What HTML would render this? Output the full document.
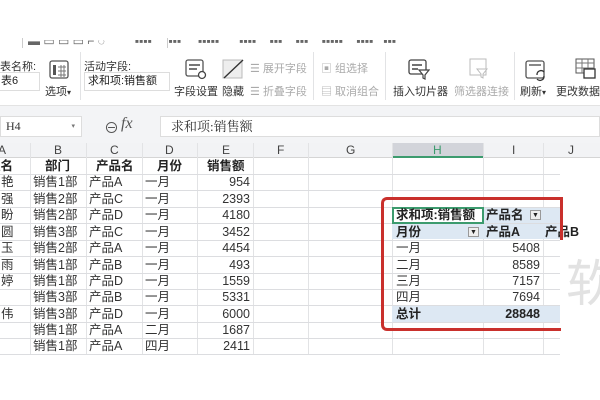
<!DOCTYPE html>
<html><head><meta charset="utf-8"><style>
*{margin:0;padding:0;box-sizing:border-box}
body{width:600px;height:400px;overflow:hidden;background:#fff;position:relative;font-family:"Liberation Sans","Noto Sans CJK SC",sans-serif;font-size:12px;color:#222}
.a{position:absolute;white-space:nowrap}
.rb{font-size:11px;color:#333}
.dim{color:#aaa}
.vl{position:absolute;width:1px;background:#e2e3e5}
.hl{position:absolute;height:1px;background:#dcdde0}
.row{position:absolute;left:0;width:600px;height:16px;line-height:16px;font-size:12.5px;color:#333}
.row span{position:absolute;top:0;white-space:nowrap}
.r{text-align:right}
</style></head><body>
<!-- top menu fragments -->
<div class="a" style="left:28px;top:40px;width:570px;height:6px;overflow:hidden;color:#666;font-size:12px;line-height:2px">▬ ▭ ▭ ▭ ⌐ ◌ &nbsp;&nbsp;&nbsp;&nbsp;&nbsp;&nbsp;&nbsp; ▪▪▪▪ &nbsp;&nbsp;&nbsp; ▪▪▪ &nbsp;&nbsp;&nbsp; ▪▪▪▪▪ &nbsp;&nbsp;&nbsp;&nbsp; ▪▪▪▪ &nbsp;&nbsp; ▪▪▪ &nbsp;&nbsp; ▪▪▪ &nbsp;&nbsp; ▪▪▪▪▪ &nbsp;&nbsp; ▪▪▪▪ &nbsp; ▪▪▪</div>
<div class="vl" style="left:22px;top:38px;height:10px;background:#ccc"></div>
<div class="vl" style="left:167px;top:38px;height:10px;background:#ccc"></div>
<!-- ribbon -->
<div class="a rb" style="left:0;top:58px">表名称:</div>
<div class="a" style="left:-2px;top:72px;width:42px;height:19px;border:1px solid #ddd;font-size:11px;line-height:17px;padding-left:2px">表6</div>
<svg class="a" style="left:49px;top:60px" width="20" height="20"><rect x="1" y="1" width="18" height="17" rx="2" fill="none" stroke="#555" stroke-width="1.3"/><rect x="4" y="5" width="3" height="10" fill="#555"/><path d="M9 7h8M9 11h8M9 15h8M12 5v12M15 5v12" stroke="#777" stroke-width="1"/></svg>
<div class="a rb" style="left:45px;top:83px">选项<span style="font-size:8px">▾</span></div>
<div class="vl" style="left:80px;top:52px;height:48px"></div>
<div class="a rb" style="left:84px;top:58px">活动字段:</div>
<div class="a" style="left:84px;top:72px;width:86px;height:19px;border:1px solid #ddd;font-size:11px;line-height:17px;padding-left:3px">求和项:销售额</div>
<svg class="a" style="left:185px;top:58px" width="22" height="22"><rect x="1" y="2" width="17" height="16" rx="2" fill="none" stroke="#555" stroke-width="1.3"/><path d="M4 7h11M4 11h8" stroke="#777" stroke-width="2"/><circle cx="17" cy="17" r="3.5" fill="#fff" stroke="#444" stroke-width="1.3"/></svg>
<div class="a rb" style="left:174px;top:83px">字段设置</div>
<svg class="a" style="left:222px;top:58px" width="22" height="22"><rect x="1" y="2" width="19" height="18" fill="#eee" stroke="#bbb"/><path d="M2 20L21 2" stroke="#333" stroke-width="1.4"/></svg>
<div class="a rb" style="left:222px;top:83px">隐藏</div>
<div class="a rb dim" style="left:250px;top:60px">☰ 展开字段</div>
<div class="a rb dim" style="left:250px;top:83px">☰ 折叠字段</div>
<div class="vl" style="left:313px;top:52px;height:48px"></div>
<div class="a rb dim" style="left:321px;top:60px">▣ 组选择</div>
<div class="a rb dim" style="left:321px;top:83px">▤ 取消组合</div>
<div class="vl" style="left:385px;top:52px;height:48px"></div>
<svg class="a" style="left:408px;top:58px" width="22" height="22"><rect x="1" y="2" width="17" height="14" rx="2" fill="none" stroke="#444" stroke-width="1.3"/><path d="M4 7h10M4 11h6" stroke="#444" stroke-width="1.5"/><path d="M11 12h10l-4 5v4l-2-1v-3z" fill="#fff" stroke="#444" stroke-width="1.2"/></svg>
<div class="a rb" style="left:393px;top:83px">插入切片器</div>
<svg class="a" style="left:468px;top:58px" width="22" height="22"><rect x="2" y="1" width="16" height="16" fill="none" stroke="#bbb"/><path d="M9 11h10l-4 5v4l-2-1v-3z" fill="#fff" stroke="#bbb"/></svg>
<div class="a rb dim" style="left:454px;top:83px">筛选器连接</div>
<div class="vl" style="left:514px;top:52px;height:48px"></div>
<svg class="a" style="left:525px;top:60px" width="22" height="22"><rect x="1" y="1" width="18" height="17" rx="2" fill="none" stroke="#555" stroke-width="1.3"/><path d="M4 5h12" stroke="#888" stroke-width="2"/><path d="M12 15a4 4 0 0 1 7-3M19 16a4 4 0 0 1-7 3" fill="none" stroke="#333" stroke-width="1.3"/></svg>
<div class="a rb" style="left:520px;top:83px">刷新<span style="font-size:8px">▾</span></div>
<svg class="a" style="left:575px;top:58px" width="22" height="22"><rect x="1" y="1" width="18" height="14" fill="none" stroke="#555"/><path d="M1 5h18M1 10h18M7 1v14M13 1v14" stroke="#777"/><rect x="9" y="11" width="11" height="9" fill="#fff" stroke="#333" stroke-width="1.3"/></svg>
<div class="a rb" style="left:556px;top:83px">更改数据源</div>
<!-- band -->
<div class="a" style="left:0;top:105px;width:600px;height:38px;background:#f3f4f6;border-top:1px solid #e3e3e3"></div>
<div class="a" style="left:0;top:116px;width:82px;height:21px;background:#fff;border:1px solid #ddd;font-family:'Liberation Serif','Noto Serif CJK SC',serif;font-size:12px;line-height:19px;padding-left:5px;color:#333">H4<span style="position:absolute;right:6px;font-size:7px;color:#777">▾</span></div>
<div class="a" style="left:104px;top:117px;font-size:15px;color:#555">⊖</div>
<div class="a" style="left:121px;top:115px;font-family:'Liberation Serif',serif;font-style:italic;font-size:16px;color:#555">fx</div>
<div class="a" style="left:160px;top:116px;width:440px;height:21px;background:#fff;border:1px solid #ddd;font-family:'Liberation Serif','Noto Serif CJK SC',serif;font-size:13px;line-height:19px;padding-left:10px;color:#333">求和项:销售额</div>
<!-- column header -->
<div class="a" style="left:0;top:143px;width:600px;height:15px;background:#f2f3f5;border-bottom:1px solid #d5d5d5"></div>
<div class="a" style="left:392px;top:143px;width:91px;height:15px;background:#d2d4da;border-bottom:2px solid #3c9b6e"></div>
<div class="a" style="left:0;top:143px;font-size:12px;color:#444;line-height:15px;width:600px;height:15px">
<span class="a" style="left:-2px">A</span><span class="a" style="left:54px">B</span><span class="a" style="left:110px">C</span><span class="a" style="left:165px">D</span><span class="a" style="left:222px">E</span><span class="a" style="left:277px">F</span><span class="a" style="left:346px">G</span><span class="a" style="left:433px;color:#3c9b6e">H</span><span class="a" style="left:512px">I</span><span class="a" style="left:568px">J</span></div>
<!-- grid lines -->
<div class="vl" style="left:30px;top:143px;height:212px"></div>
<div class="vl" style="left:86px;top:143px;height:212px"></div>
<div class="vl" style="left:142px;top:143px;height:212px"></div>
<div class="vl" style="left:197px;top:143px;height:212px"></div>
<div class="vl" style="left:253px;top:143px;height:212px"></div>
<div class="vl" style="left:308px;top:143px;height:212px"></div>
<div class="vl" style="left:392px;top:143px;height:212px"></div>
<div class="vl" style="left:483px;top:143px;height:212px"></div>
<div class="vl" style="left:543px;top:143px;height:212px"></div>
<div class="hl" style="left:0;top:174px;width:560px"></div>
<div class="hl" style="left:0;top:190px;width:560px"></div>
<div class="hl" style="left:0;top:207px;width:560px"></div>
<div class="hl" style="left:0;top:223px;width:560px"></div>
<div class="hl" style="left:0;top:240px;width:560px"></div>
<div class="hl" style="left:0;top:256px;width:560px"></div>
<div class="hl" style="left:0;top:273px;width:560px"></div>
<div class="hl" style="left:0;top:289px;width:560px"></div>
<div class="hl" style="left:0;top:305px;width:560px"></div>
<div class="hl" style="left:0;top:322px;width:560px"></div>
<div class="hl" style="left:0;top:338px;width:560px"></div>
<div class="hl" style="left:0;top:354px;width:560px"></div>
<!-- data -->
<div class="row" style="top:158px;font-weight:bold;color:#222"><span style="left:-12px">姓名</span><span style="left:45px">部门</span><span style="left:96px">产品名</span><span style="left:157px">月份</span><span style="left:207px">销售额</span></div>
<div class="row" style="top:174px"><span style="left:1px">艳</span><span style="left:33px">销售1部</span><span style="left:89px">产品A</span><span style="left:145px">一月</span><span class="r" style="left:200px;width:50px">954</span></div>
<div class="row" style="top:191px"><span style="left:1px">强</span><span style="left:33px">销售2部</span><span style="left:89px">产品C</span><span style="left:145px">一月</span><span class="r" style="left:200px;width:50px">2393</span></div>
<div class="row" style="top:207px"><span style="left:1px">盼</span><span style="left:33px">销售2部</span><span style="left:89px">产品D</span><span style="left:145px">一月</span><span class="r" style="left:200px;width:50px">4180</span></div>
<div class="row" style="top:224px"><span style="left:1px">圆</span><span style="left:33px">销售3部</span><span style="left:89px">产品C</span><span style="left:145px">一月</span><span class="r" style="left:200px;width:50px">3452</span></div>
<div class="row" style="top:240px"><span style="left:1px">玉</span><span style="left:33px">销售2部</span><span style="left:89px">产品A</span><span style="left:145px">一月</span><span class="r" style="left:200px;width:50px">4454</span></div>
<div class="row" style="top:257px"><span style="left:1px">雨</span><span style="left:33px">销售1部</span><span style="left:89px">产品B</span><span style="left:145px">一月</span><span class="r" style="left:200px;width:50px">493</span></div>
<div class="row" style="top:273px"><span style="left:1px">婷</span><span style="left:33px">销售1部</span><span style="left:89px">产品D</span><span style="left:145px">一月</span><span class="r" style="left:200px;width:50px">1559</span></div>
<div class="row" style="top:289px"><span style="left:33px">销售3部</span><span style="left:89px">产品B</span><span style="left:145px">一月</span><span class="r" style="left:200px;width:50px">5331</span></div>
<div class="row" style="top:306px"><span style="left:1px">伟</span><span style="left:33px">销售3部</span><span style="left:89px">产品D</span><span style="left:145px">一月</span><span class="r" style="left:200px;width:50px">6000</span></div>
<div class="row" style="top:322px"><span style="left:33px">销售1部</span><span style="left:89px">产品A</span><span style="left:145px">二月</span><span class="r" style="left:200px;width:50px">1687</span></div>
<div class="row" style="top:338px"><span style="left:33px">销售1部</span><span style="left:89px">产品A</span><span style="left:145px">四月</span><span class="r" style="left:200px;width:50px">2411</span></div>
<!-- pivot -->
<div class="a" style="left:483px;top:208px;width:77px;height:15px;background:#dde8f3"></div>
<div class="a" style="left:392px;top:224px;width:168px;height:15px;background:#dde8f3"></div>
<div class="a" style="left:392px;top:306px;width:168px;height:16px;background:#dde8f3"></div>
<div class="a" style="left:392px;top:207px;width:92px;height:17px;border:2px solid #3c9b6e"></div>
<div class="row" style="top:207px;font-weight:bold;color:#222"><span style="left:396px">求和项:销售额</span><span style="left:486px">产品名</span><span style="left:530px;top:3px;width:11px;height:10px;border:1px solid #999;background:#eee;font-size:7px;line-height:9px;text-align:center;font-weight:normal">▼</span></div>
<div class="row" style="top:224px;font-weight:bold;color:#222"><span style="left:396px">月份</span><span style="left:468px;top:3px;width:11px;height:10px;border:1px solid #999;background:#eee;font-size:7px;line-height:9px;text-align:center;font-weight:normal">▼</span><span style="left:486px">产品A</span><span style="left:545px">产品B</span></div>
<div class="row" style="top:240px"><span style="left:396px">一月</span><span class="r" style="left:483px;width:57px">5408</span></div>
<div class="row" style="top:257px"><span style="left:396px">二月</span><span class="r" style="left:483px;width:57px">8589</span></div>
<div class="row" style="top:273px"><span style="left:396px">三月</span><span class="r" style="left:483px;width:57px">7157</span></div>
<div class="row" style="top:289px"><span style="left:396px">四月</span><span class="r" style="left:483px;width:57px">7694</span></div>
<div class="row" style="top:306px;font-weight:bold;color:#222"><span style="left:396px">总计</span><span class="r" style="left:483px;width:57px">28848</span></div>
<div class="a" style="left:560px;top:240px;width:40px;height:160px;background:#fff"></div>
<div class="a" style="left:566px;top:254px;font-size:50px;color:#e2e2e2;line-height:60px">软</div>
<div class="a" style="left:381px;top:197px;width:180px;height:134px;border:3px solid #c9302c;border-right:none;border-radius:6px 0 0 6px"></div>
<div class="a" style="left:560px;top:197px;width:3px;height:43px;background:#c9302c"></div>
</body></html>
